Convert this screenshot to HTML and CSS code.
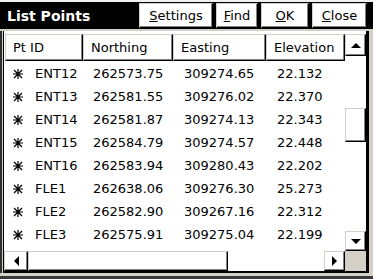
FILE: index.html
```html
<!DOCTYPE html>
<html lang="en">
<head>
    <meta charset="UTF-8">
    <meta name="viewport" content="width=device-width, initial-scale=1.0">
    <title>List Points</title>
    <link rel="stylesheet" href="styles.css">
</head>
<body>

    <div class="window">
        <div class="titlebar">
            <span class="title">List Points</span>
            <div class="actions">
                <button class="btn btn-settings"><u>S</u>ettings</button>
                <button class="btn btn-find"><u>F</u>ind</button>
                <button class="btn btn-ok"><u>O</u>K</button>
                <button class="btn btn-close"><u>C</u>lose</button>
            </div>
        </div>

        <div class="frame">
            <div class="table">
                <div class="head">
                    <div class="th col-id">Pt ID</div>
                    <div class="th col-n">Northing</div>
                    <div class="th col-e">Easting</div>
                    <div class="th col-z">Elevation</div>
                </div>
                <div class="rows" id="rows"></div>
            </div>

            <div class="vscroll">
                <div class="sb-btn sb-up"><i class="tri tri-up"></i></div>
                <div class="vtrack"><div class="vthumb"></div></div>
                <div class="sb-btn sb-down"><i class="tri tri-down"></i></div>
            </div>

            <div class="hscroll">
                <div class="sb-btn sb-left"><i class="tri tri-left"></i></div>
                <div class="htrack"><div class="hthumb"></div></div>
                <div class="sb-btn sb-right"><i class="tri tri-right"></i></div>
            </div>

            <div class="corner"></div>
        </div>
    </div>

    <script>
        const points = [
            ["ENT12", "262573.75", "309274.65", "22.132"],
            ["ENT13", "262581.55", "309276.02", "22.370"],
            ["ENT14", "262581.87", "309274.13", "22.343"],
            ["ENT15", "262584.79", "309274.57", "22.448"],
            ["ENT16", "262583.94", "309280.43", "22.202"],
            ["FLE1", "262638.06", "309276.30", "25.273"],
            ["FLE2", "262582.90", "309267.16", "22.312"],
            ["FLE3", "262575.91", "309275.04", "22.199"]
        ];

        // point marker: small eight-armed star
        const mark = '<svg class="mark" width="10" height="10" viewBox="0 0 10 10">' +
            '<path d="M5 0V10M0 5H10M1 1L9 9M9 1L1 9" stroke="#000" stroke-width="1.2" fill="none"/></svg>';

        const rows = document.getElementById("rows");
        points.forEach(p => {
            const row = document.createElement("div");
            row.className = "row";
            row.innerHTML =
                `<span class="td col-id">${mark}<span class="pid">${p[0]}</span></span>` +
                `<span class="td col-n">${p[1]}</span>` +
                `<span class="td col-e">${p[2]}</span>` +
                `<span class="td col-z">${p[3]}</span>`;
            rows.appendChild(row);
        });
    </script>

</body>
</html>
```

FILE: styles.css
```css
* {
    margin: 0;
    padding: 0;
    box-sizing: border-box;
}

body {
    font-family: "DejaVu Sans", sans-serif;
    font-size: 13px;
    color: #000;
    background-color: #d4d0c8;
}

.window {
    width: 373px;
    height: 279px;
    background-color: #d4d0c8;
    border-top: 2px solid #f0f0f0;
    border-bottom: 3px solid #3a3a3a;
}

.titlebar {
    height: 27px;
    background-color: #000;
    display: flex;
    align-items: center;
    padding: 0 6px 0 7px;
    margin-bottom: 2px;
}

.title {
    flex: 1;
    color: #fff;
    font-weight: bold;
    font-size: 14px;
}

.actions {
    display: flex;
    gap: 3px;
}

.btn {
    height: 25px;
    font-family: inherit;
    font-size: 13px;
    color: #000;
    background-color: #fff;
    border: 1px solid;
    border-color: #d4d0c8 #000 #000 #d4d0c8;
    box-shadow: inset -1px -1px 0 #808080;
    text-align: center;
}

.btn-settings { width: 74px; }
.btn-find { width: 42px; }
.btn-ok { width: 48px; }
.btn-close { width: 55px; }

.frame {
    width: 369px;
    height: 242px;
    background-color: #fff;
    padding: 3px 3px 2px 4px;
    box-shadow: inset 2px 0 0 #303030, inset 3px 0 0 #d4d0c8, inset 4px 0 0 #000,
                inset -3px 0 0 #000, inset 0 -2px 0 #000;
    display: grid;
    grid-template-columns: 341px 21px;
    grid-template-rows: 217px 20px;
}

.table {
    padding-left: 1px;
    overflow: hidden;
}

.head {
    display: flex;
    height: 27px;
}

.th {
    border: 1px solid;
    border-color: #d4d0c8 #000 #000 #d4d0c8;
    box-shadow: inset -1px -1px 0 #808080;
    padding: 5px 0 0 7px;
    white-space: nowrap;
}

.col-id { width: 78px; }
.col-n { width: 90px; }
.col-e { width: 93px; }
.col-z { width: 79px; }

.rows {
    padding-top: 1px;
}

.row {
    display: flex;
    height: 23px;
    align-items: center;
}

.td {
    white-space: nowrap;
}

.td.col-id {
    display: flex;
    align-items: center;
    padding-left: 8px;
}

.mark {
    flex: none;
}

.pid {
    margin-left: 12px;
}

.td.col-n { padding-left: 10px; }
.td.col-e { padding-left: 11px; }
.td.col-z { padding-left: 11px; }

.vscroll {
    display: flex;
    flex-direction: column;
}

.sb-btn {
    display: flex;
    align-items: center;
    justify-content: center;
    background-color: #fff;
    border: 1px solid;
    border-color: #d4d0c8 #000 #000 #d4d0c8;
    box-shadow: inset -1px -1px 0 #808080;
}

.sb-up { height: 22px; }
.sb-down { height: 20px; }

.vtrack {
    flex: 1;
    background-color: #fff;
}

.vthumb {
    margin-top: 52px;
    height: 34px;
    border: 1px solid;
    border-color: #d4d0c8 #000 #000 #d4d0c8;
    box-shadow: inset -1px -1px 0 #808080;
}

.hscroll {
    display: flex;
}

.sb-left { width: 24px; }
.sb-right { width: 21px; }

.htrack {
    flex: 1;
    background-color: #fff;
}

.hthumb {
    width: 200px;
    height: 100%;
    border: 1px solid;
    border-color: #d4d0c8 #000 #000 #d4d0c8;
    box-shadow: inset -1px -1px 0 #808080;
}

.corner {
    background-color: #d4d0c8;
}

.tri {
    display: block;
    width: 0;
    height: 0;
}

.tri-up {
    border-left: 5px solid transparent;
    border-right: 5px solid transparent;
    border-bottom: 5px solid #000;
}

.tri-down {
    border-left: 5px solid transparent;
    border-right: 5px solid transparent;
    border-top: 5px solid #000;
}

.tri-left {
    border-top: 5px solid transparent;
    border-bottom: 5px solid transparent;
    border-right: 5px solid #000;
}

.tri-right {
    border-top: 5px solid transparent;
    border-bottom: 5px solid transparent;
    border-left: 5px solid #000;
}
```
